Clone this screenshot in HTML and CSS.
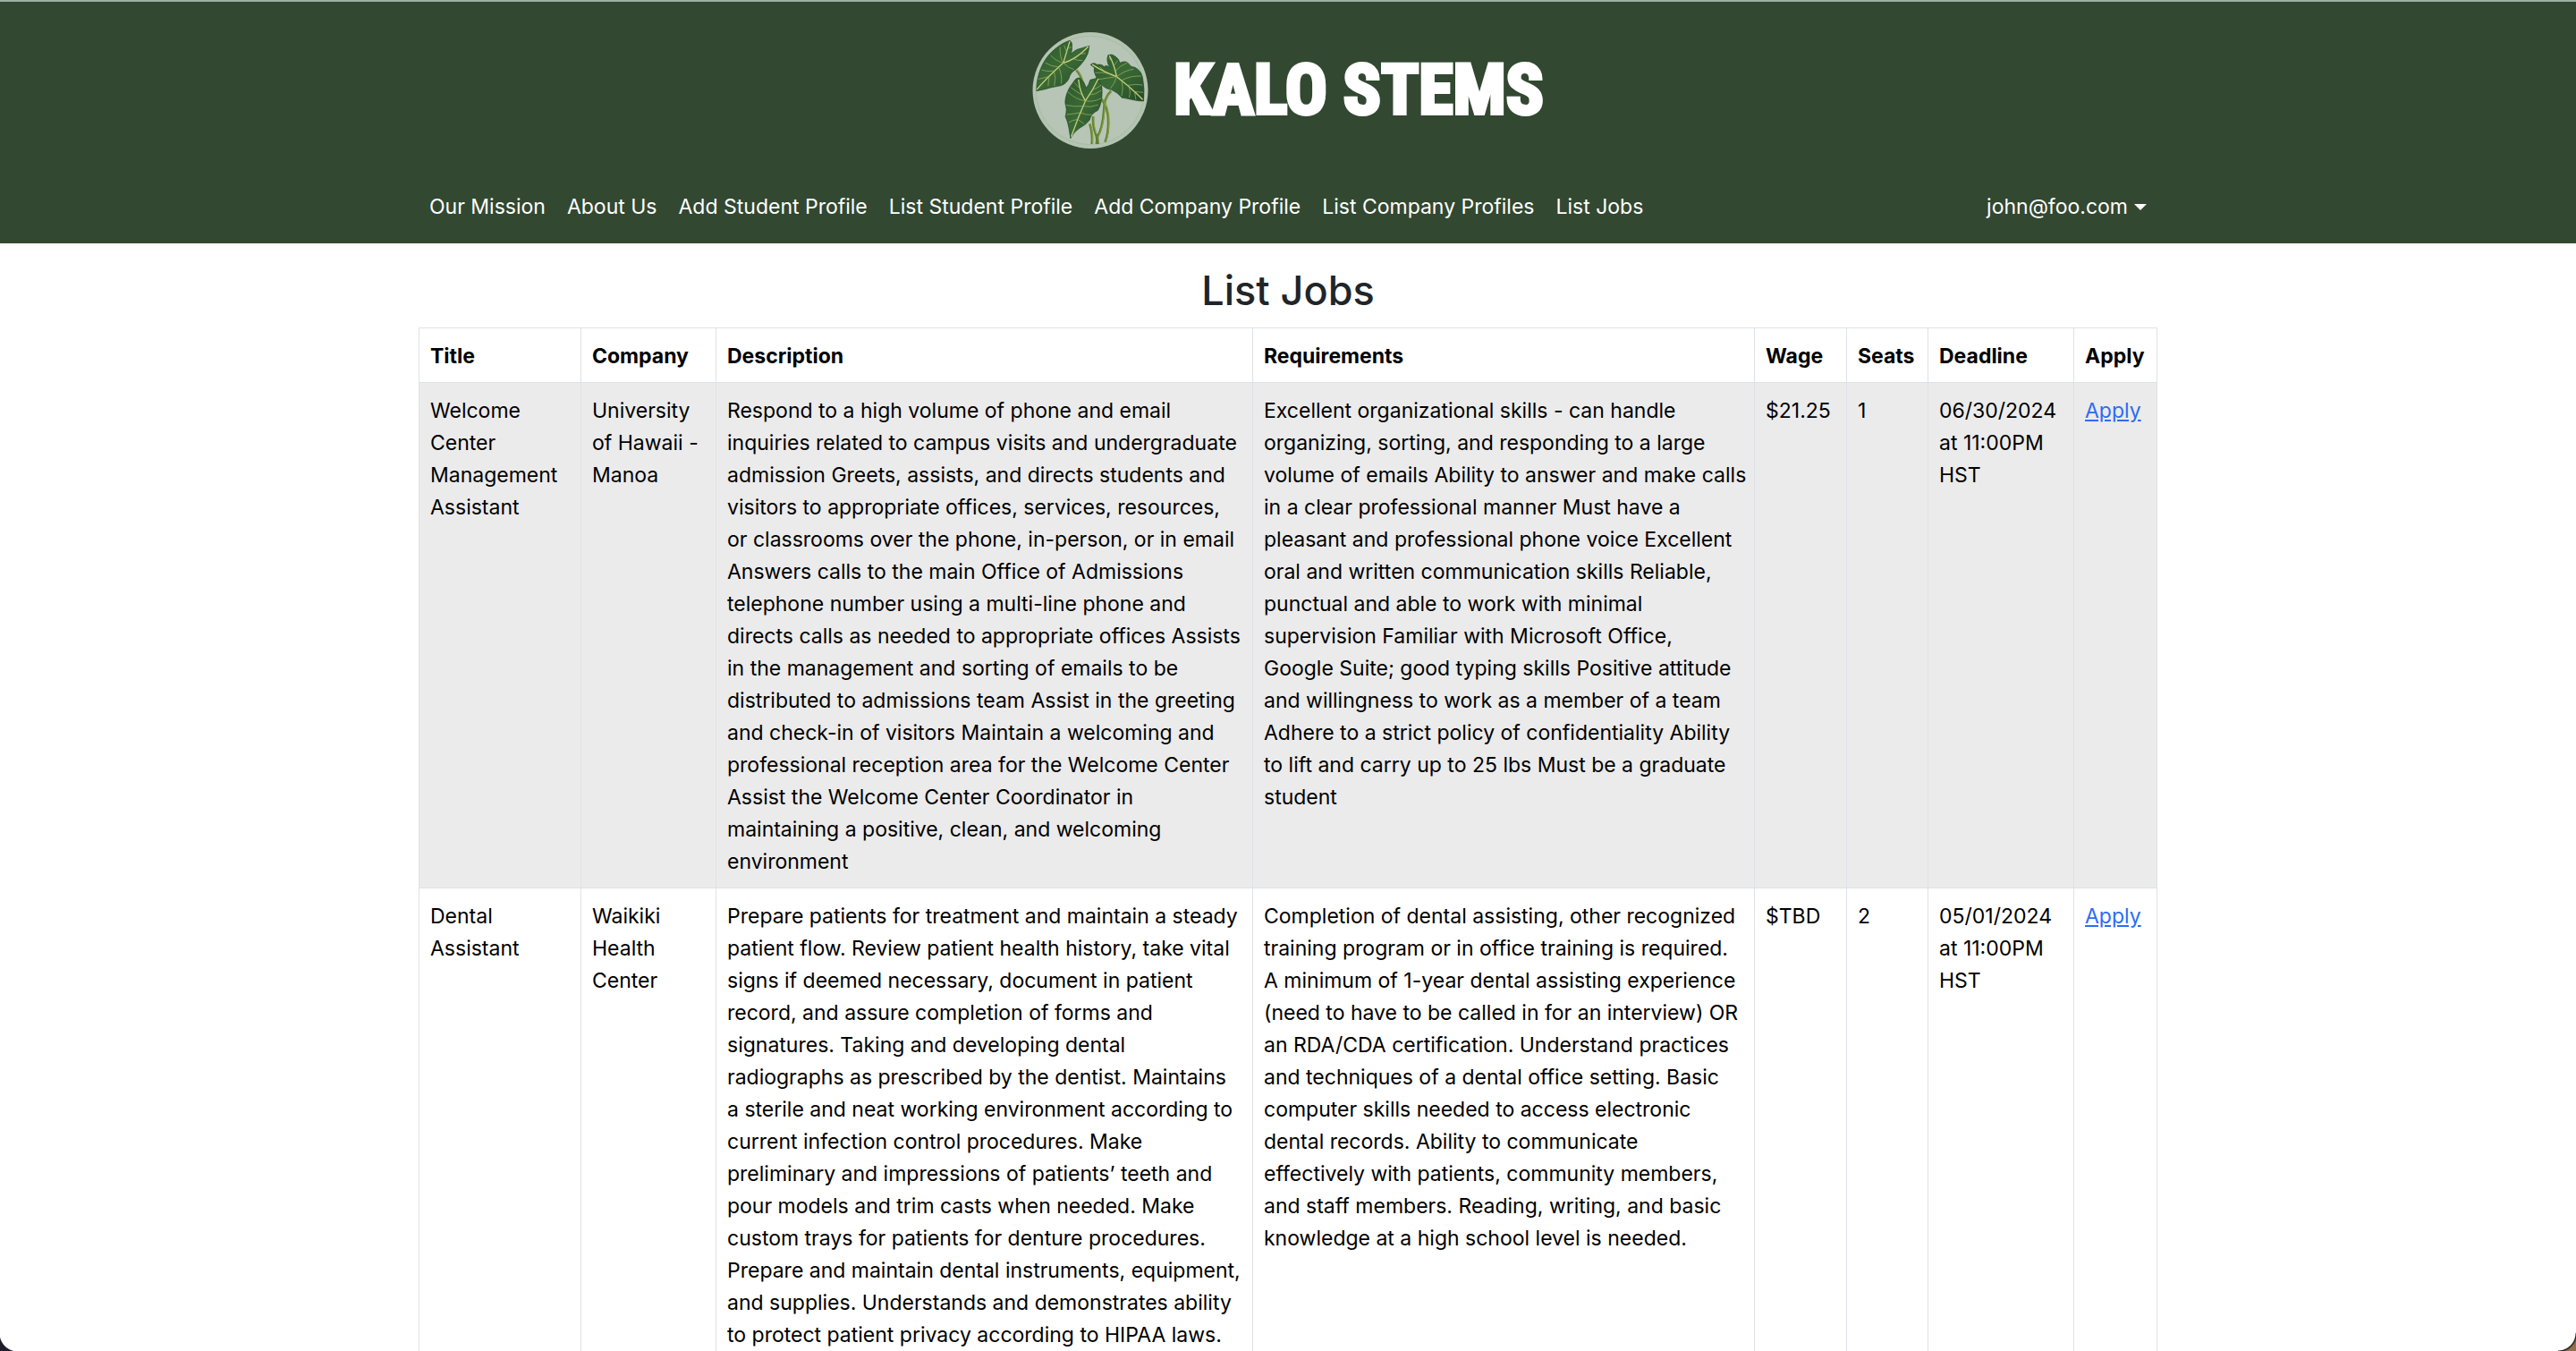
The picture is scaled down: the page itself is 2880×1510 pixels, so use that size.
FILE: index.html
```html
<!DOCTYPE html>
<html lang="en">
<head>
<meta charset="utf-8">
<title>Kalo Stems</title>
<link rel="stylesheet" href="styles.css">
</head>
<body>
<header class="site-header">
  <div class="container">
    <a class="brand" href="#">
      <svg class="brand-logo" viewBox="45 48 387 390" aria-hidden="true">
        <defs>
          <linearGradient id="leaf" x1="0" y1="0" x2="1" y2="1">
            <stop offset="0" stop-color="#2c5a2c"/><stop offset=".5" stop-color="#3a6a36"/><stop offset="1" stop-color="#234a27"/>
          </linearGradient>
        </defs>
        <ellipse cx="238.500" cy="243" rx="193.500" ry="195" fill="#b3c4b0"/>
        <circle cx="238" cy="243" r="182" fill="#b6c5b5" stroke="#a3b5a1" stroke-width="2"/>
        <g fill="none" stroke="#5f7f2f" stroke-width="8" stroke-linecap="butt">
          <path d="M192 176Q208 192 214 222"/>
          <path d="M237 355Q247 390 244 423"/>
          <path d="M248 330Q246 362 256 388Q263 402 259 423"/>
          <path d="M308 245Q284 268 284 312Q280 370 262 400L264 423"/>
          <path d="M276 272Q300 300 299 350Q299 390 288 416"/>
        </g>
        <g fill="none" stroke="#9fb254" stroke-width="2">
          <path d="M194 176Q210 192 216 222M239 355Q249 390 246 423M250 330Q248 362 258 388M310 245Q286 268 286 312Q282 370 264 400M278 272Q302 300 301 350Q301 390 290 416"/>
        </g>
        <g fill="url(#leaf)" stroke="#1f4526" stroke-width="2" stroke-linejoin="round">
          <path d="M58 245C57 212 68 172 84 146C100 117 138 85 170 76Q179 82 177 97Q178 110 173 121Q191 103 211 101L235 94Q234 120 218 142Q204 162 190 173Q172 181 166 205Q154 227 130 229Q105 233 87 239Z"/>
          <path d="M172 404C168 380 165 350 155 332Q162 308 154 284C155 258 165 236 182 215Q192 198 205 202Q218 214 225 235Q234 224 238 208Q256 205 265 198Q280 222 278 248Q278 286 264 310Q240 321 236 343Q222 360 202 370Q183 382 172 404Z"/>
          <path d="M417 279C393 280 367 270 345 268Q330 250 309 241C284 238 266 216 256 193Q249 179 252 167L239 157Q250 147 261 157Q277 154 285 164Q294 155 305 168Q290 145 298 125Q311 119 322 129Q336 138 337 151Q359 141 367 154Q375 166 388 166Q410 177 414 202Q421 238 417 279Z"/>
        </g>
        <g fill="none" stroke="#c6ce7b" stroke-width="4" stroke-linecap="round">
          <path d="M60 239Q96 197 148 151Q189 141 231 97M148 151Q158 118 169 80"/>
          <path d="M175 397Q196 336 222 278Q247 243 265 205M222 278Q203 248 199 208"/>
          <path d="M413 273Q378 236 327 197Q283 181 246 157M327 197Q318 155 303 128"/>
        </g>
        <g fill="none" stroke="#a4b763" stroke-width="2" stroke-linecap="round">
          <path d="M148 151Q122 145 106 126M132 165Q106 163 88 151M117 178Q92 181 76 175M99 197Q80 202 65 205M132 165Q145 189 141 219M117 178Q124 202 118 227M100 197L97 228M148 151Q167 170 183 173M148 151Q135 130 137 99M160 117L151 93M164 102L174 98M180 137Q198 144 211 143M201 122L222 119"/>
          <path d="M222 278Q190 275 163 248M214 296Q186 299 159 293M205 318Q181 322 161 324M196 340Q176 343 167 350M214 296Q239 302 264 292M205 318Q225 326 242 325M196 340L216 354M222 278Q246 284 274 270M237 258Q256 258 274 244M248 240Q263 236 275 225M211 259Q192 247 174 234M203 236L186 218"/>
          <path d="M327 197Q298 201 267 206M310 190Q286 181 256 184M290 182L270 164M327 197Q320 220 307 236M344 209Q350 235 344 260M365 226Q376 244 369 266M387 247L391 273M327 197Q351 177 382 172M344 209Q374 193 408 195M365 226Q393 220 413 225M387 247L415 250M323 178Q338 160 361 151M318 159L330 144M313 146L300 135"/>
        </g>
      </svg>
      <span class="brand-name">KALO STEMS</span>
    </a>
    <nav class="nav">
      <ul class="nav-list">
        <li><a href="#">Our Mission</a></li>
        <li><a href="#">About Us</a></li>
        <li><a href="#">Add Student Profile</a></li>
        <li><a href="#">List Student Profile</a></li>
        <li><a href="#">Add Company Profile</a></li>
        <li><a href="#">List Company Profiles</a></li>
        <li><a href="#">List Jobs</a></li>
      </ul>
      <button class="user-menu" type="button">john@foo.com</button>
    </nav>
  </div>
</header>
<main class="container">
  <h1 class="page-title">List Jobs</h1>
  <table class="jobs">
    <colgroup>
      <col class="c-title"><col class="c-company"><col class="c-description"><col class="c-requirements"><col class="c-wage"><col class="c-seats"><col class="c-deadline"><col class="c-apply">
    </colgroup>
    <thead>
      <tr><th>Title</th><th>Company</th><th>Description</th><th>Requirements</th><th>Wage</th><th>Seats</th><th>Deadline</th><th>Apply</th></tr>
    </thead>
    <tbody>
      <tr>
        <td>Welcome Center Management Assistant</td>
        <td>University of&nbsp;Hawaii&nbsp;- Manoa</td>
        <td>Respond to a high volume of phone and email inquiries related to campus visits and undergraduate admission Greets, assists, and directs students and visitors to appropriate offices, services, resources, or classrooms over the phone, in-person, or in email Answers calls to the main Office of Admissions telephone number using a multi-line phone and directs calls as needed to appropriate offices Assists in the management and sorting of emails to be distributed to admissions team Assist in the greeting and check-in of visitors Maintain a welcoming and professional reception area for the Welcome Center Assist the Welcome Center Coordinator in maintaining a positive, clean, and welcoming environment</td>
        <td>Excellent organizational skills - can handle organizing, sorting, and responding to a large volume of emails Ability to answer and make calls in a clear professional manner Must have a pleasant and professional phone voice Excellent oral and written communication skills Reliable, punctual and able to work with minimal supervision Familiar with Microsoft Office, Google Suite; good typing skills Positive attitude and willingness to work as a member of a team Adhere to a strict policy of confidentiality Ability to lift and carry up to 25 lbs Must be a graduate student</td>
        <td>$21.25</td><td>1</td><td>06/30/2024 at 11:00PM HST</td><td><a href="#">Apply</a></td>
      </tr>
      <tr>
        <td>Dental Assistant</td>
        <td>Waikiki Health Center</td>
        <td>Prepare patients for treatment and maintain a steady patient flow. Review patient health history, take vital signs if deemed necessary, document in patient record, and assure completion of forms and signatures. Taking and developing dental radiographs as prescribed by the dentist. Maintains a&nbsp;sterile and neat working environment according to current infection control procedures. Make preliminary and impressions of patients’ teeth and pour models and trim casts when needed. Make custom trays for patients for denture procedures. Prepare and maintain dental instruments, equipment, and supplies. Understands and demonstrates ability to protect patient privacy according to HIPAA laws.</td>
        <td>Completion of dental assisting, other recognized training program or in office training is required. A minimum of 1-year dental assisting experience (need to have to be called in for an interview) OR an RDA/CDA certification. Understand practices and techniques of a dental office setting. Basic computer skills needed to access electronic dental records. Ability to communicate effectively&nbsp;with patients, community members, and staff members. Reading, writing, and basic knowledge at a high school level is needed.</td>
        <td>$TBD</td><td>2</td><td>05/01/2024 at 11:00PM HST</td><td><a href="#">Apply</a></td>
      </tr>
    </tbody>
  </table>
</main>
</body>
</html>
```
FILE: styles.css
```css
* { box-sizing: border-box; }

body {
  margin: 0;
  height: 100vh;
  overflow: hidden;
  background: #fff;
  color: #212529;
  font-family: Inter, "Liberation Sans", sans-serif;
  font-size: 23px;
  line-height: 36px;
}

/* rounded lower corners of the window */
body::before,
body::after {
  content: "";
  position: fixed;
  bottom: 0;
  width: 20px;
  height: 20px;
}
body::before { left: 0; background: radial-gradient(circle at 100% 0, transparent 20px, #1f1d29 21px); }
body::after { right: 0; background: radial-gradient(circle at 0 0, transparent 19px, #1c1a18 20px, #94704a 22px); }

.container {
  max-width: 1980px;
  margin: 0 auto;
  padding: 0 18px;
}

.site-header {
  background: #324831;
  border-top: 2px solid #a0b19f;
  padding: 33px 0 11px;
}

.brand {
  display: flex;
  align-items: center;
  justify-content: center;
  gap: 28px;
  height: 132px;
  color: #fff;
  text-decoration: none;
}
.brand-logo { width: 130px; height: 130px; }
.brand-name {
  font-family: "Liberation Sans Narrow", "Roboto Condensed", Roboto, sans-serif;
  font-size: 78px;
  font-weight: 700;
  line-height: 80px;
  -webkit-text-stroke: 4px #fff;
}

.nav {
  display: flex;
  justify-content: space-between;
  align-items: center;
  margin-top: 33px;
  padding: 13px 12px 12px;
}
.nav-list {
  display: flex;
  gap: 24px;
  margin: 0;
  padding: 0;
  list-style: none;
}
.nav-list a { color: #fff; text-decoration: none; }

.user-menu {
  display: flex;
  align-items: center;
  gap: 7px;
  padding: 0;
  border: 0;
  background: none;
  color: #fff;
  font: inherit;
}
.user-menu::after {
  content: "";
  border: 7px solid transparent;
  border-top-color: #fff;
  border-bottom: 0;
}

.page-title {
  margin: 0;
  padding: 24px 0 12px;
  font-size: 45px;
  font-weight: 500;
  line-height: 58px;
  text-align: center;
}

.jobs {
  width: 100%;
  table-layout: fixed;
  border-collapse: collapse;
  color: #000;
}
.jobs th,
.jobs td {
  padding: 13px 8px 11px 12px;
  border: 1px solid #dee2e6;
  text-align: left;
  vertical-align: top;
}
.jobs th { font-weight: 700; }
.jobs tbody tr:nth-child(odd) { background: #ebebeb; }
.jobs a { color: #2d6cf6; }

.c-title { width: 181px; }
.c-company { width: 151px; }
.c-description { width: 600px; }
.c-wage { width: 103px; }
.c-seats { width: 91px; }
.c-deadline { width: 163px; }
.c-apply { width: 93px; }
```
